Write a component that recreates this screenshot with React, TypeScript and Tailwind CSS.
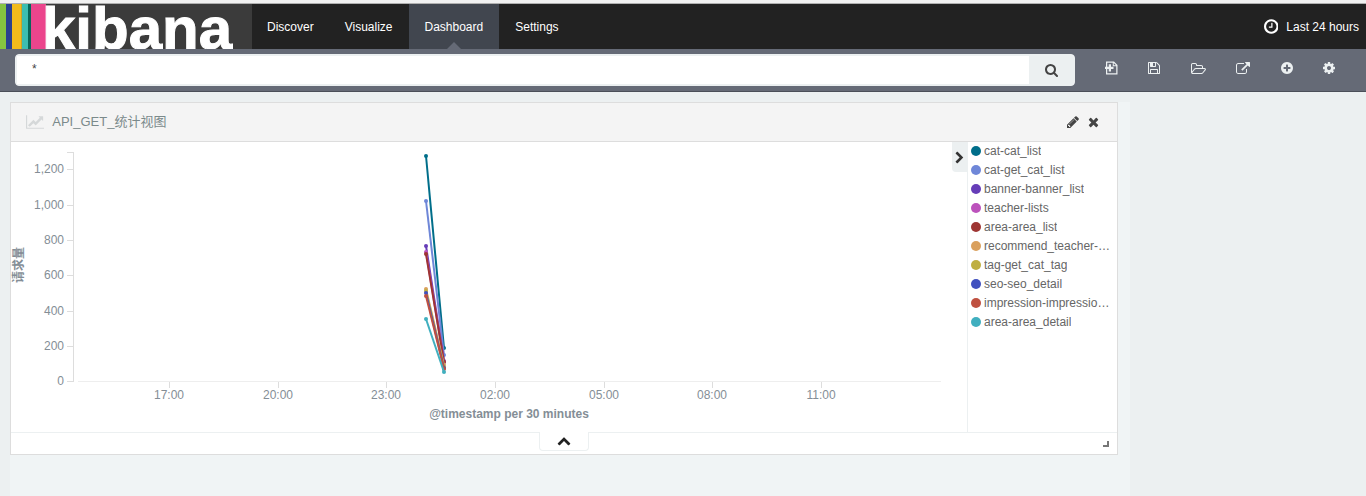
import React from 'react';

type Glyph = { w: number; d: string };

const glyphs: Record<string, Glyph> = {
  clock: { w: 1536, d: 'M896 544v448q0 14-9 23t-23 9h-320q-14 0-23-9t-9-23v-64q0-14 9-23t23-9h224v-352q0-14 9-23t23-9h64q14 0 23 9t9 23zm416 352q0-148-73-273t-198-198-273-73-273 73-198 198-73 273 73 273 198 198 273 73 273-73 198-198 73-273zm224 0q0 209-103 385.5t-279.5 279.5-385.5 103-385.5-103-279.5-279.5-103-385.5 103-385.5 279.5-279.5 385.5-103 385.5 103 279.5 279.5 103 385.5z' },
  search: { w: 1664, d: 'M1152 832q0-185-131.5-316.5t-316.5-131.5-316.5 131.5-131.5 316.5 131.5 316.5 316.5 131.5 316.5-131.5 131.5-316.5zm512 832q0 52-38 90t-90 38q-54 0-90-38l-343-342q-179 124-399 124-143 0-273.5-55.5t-225-150-150-225-55.5-273.5 55.5-273.5 150-225 225-150 273.5-55.5 273.5 55.5 225 150 150 225 55.5 273.5q0 220-124 399l343 343q37 37 37 90z' },
  fresh: { w: 1664, d: 'M128 64h1024l448 448v1216h-1472zM288 224v1344h1152v-896h-448v-448zM1120 256v288h288zM480 416h288v320h320v288h-320v320h-288v-320h-480v-288h480z' },
  save: { w: 1536, d: 'M384 1536h768v-384h-768v384zm896 0h128v-896q0-14-10-38.5t-20-34.5l-281-281q-10-10-34-20t-39-10v416q0 40-28 68t-68 28h-576q-40 0-68-28t-28-68v-416h-128v1280h128v-416q0-40 28-68t68-28h832q40 0 68 28t28 68v416zm-384-928v-320q0-13-9.5-22.5t-22.5-9.5h-192q-13 0-22.5 9.5t-9.5 22.5v320q0 13 9.5 22.5t22.5 9.5h192q13 0 22.5-9.5t9.5-22.5zm640 32v928q0 40-28 68t-68 28h-1344q-40 0-68-28t-28-68v-1344q0-40 28-68t68-28h928q40 0 88 20t76 48l280 280q28 28 48 76t20 88z' },
  folder: { w: 1920, d: 'M1781 1061q0-35-53-35h-1088q-40 0-85.5 21.5t-71.5 52.5l-294 363q-18 24-18 40 0 35 53 35h1088q40 0 86-22t71-53l294-363q18-22 18-39zm-1141-163h768v-160q0-40-28-68t-68-28h-576q-40 0-68-28t-28-68v-64q0-40-28-68t-68-28h-320q-40 0-68 28t-28 68v853l256-315q44-53 116-87.5t140-34.5zm1269 163q0 62-46 120l-295 363q-43 53-116 87.5t-140 34.5h-1088q-92 0-158-66t-66-158v-960q0-92 66-158t158-66h320q92 0 158 66t66 158v32h544q92 0 158 66t66 158v160h192q54 0 99 24.5t67 70.5q15 32 15 68z' },
  share: { w: 1792, d: 'M1408 1056v320q0 119-84.5 203.5t-203.5 84.5h-832q-119 0-203.5-84.5t-84.5-203.5v-832q0-119 84.5-203.5t203.5-84.5h704q14 0 23 9t9 23v64q0 14-9 23t-23 9h-704q-66 0-113 47t-47 113v832q0 66 47 113t113 47h832q66 0 113-47t47-113v-320q0-14 9-23t23-9h64q14 0 23 9t9 23zm384-864v512q0 26-19 45t-45 19-45-19l-176-176-652 652q-10 10-23 10t-23-10l-114-114q-10-10-10-23t10-23l652-652-176-176q-19-19-19-45t19-45 45-19h512q26 0 45 19t19 45z' },
  plus: { w: 1536, d: 'M1216 960v-128q0-26-19-45t-45-19h-256v-256q0-26-19-45t-45-19h-128q-26 0-45 19t-19 45v256h-256q-26 0-45 19t-19 45v128q0 26 19 45t45 19h256v256q0 26 19 45t45 19h128q26 0 45-19t19-45v-256h256q26 0 45-19t19-45zm320-64q0 209-103 385.5t-279.5 279.5-385.5 103-385.5-103-279.5-279.5-103-385.5 103-385.5 279.5-279.5 385.5-103 385.5 103 279.5 279.5 103 385.5z' },
  gear: { w: 1536, d: 'M1024 896q0-106-75-181t-181-75-181 75-75 181 75 181 181 75 181-75 75-181zm512-109v222q0 12-8 23t-20 13l-185 28q-19 54-39 91 35 50 107 138 10 12 10 25t-9 23q-27 37-99 108t-94 71q-12 0-26-9l-138-108q-44 23-91 38-16 136-29 186-7 28-36 28h-222q-14 0-24.5-8.5t-11.5-21.5l-28-184q-49-16-90-37l-141 107q-10 9-25 9-14 0-25-11-126-114-165-168-7-10-7-23 0-12 8-23 15-21 51-66.5t54-70.5q-27-50-41-99l-183-27q-13-2-21-12.5t-8-23.5v-222q0-12 8-23t19-13l186-28q14-46 39-92-40-57-107-138-10-12-10-24 0-10 9-23 26-36 98.5-107.5t94.5-71.5q13 0 26 10l138 107q44-23 91-38 16-136 29-186 7-28 36-28h222q14 0 24.5 8.5t11.5 21.5l28 184q49 16 90 37l142-107q9-9 24-9 13 0 25 10 129 119 165 170 7 8 7 22 0 12-8 23-15 21-51 66.5t-54 70.5q26 50 41 98l183 28q13 2 21 12.5t8 23.5z' },
  chart: { w: 2048, d: 'M2048 1536v128h-2048v-1536h128v1408h1920zm-128-1248v435q0 21-19.5 29.5t-35.5-7.5l-121-121-633 633q-10 10-23 10t-23-10l-233-233-416 416-192-192 585-585q10-10 23-10t23 10l233 233 464-464-121-121q-16-16-7.5-35.5t29.5-19.5h435q14 0 23 9t9 23z' },
  pencil: { w: 1536, d: 'M363 1536l91-91-235-235-91 91v107h128v128h107zm523-928q0-22-22-22-10 0-17 7l-542 542q-7 7-7 17 0 22 22 22 10 0 17-7l542-542q7-7 7-17zm-54-192l416 416-832 832h-416v-416zm683 96q0 53-37 90l-166 166-416-416 166-165q36-38 90-38 53 0 91 38l235 234q37 39 37 91z' },
  times: { w: 1408, d: 'M1298 1322q0 40-28 68l-136 136q-28 28-68 28t-68-28l-294-294-294 294q-28 28-68 28t-68-28l-136-136q-28-28-28-68t28-68l294-294-294-294q-28-28-28-68t28-68l136-136q28-28 68-28t68 28l294 294 294-294q28-28 68-28t68 28l136 136q28 28 28 68t-28 68l-294 294 294 294q28 28 28 68z' },
  right: { w: 1280, d: 'M1107 941l-742 742q-19 19-45 19t-45-19l-166-166q-19-19-19-45t19-45l531-531-531-531q-19-19-19-45t19-45l166-166q19-19 45-19t45 19l742 742q19 19 19 45t-19 45z' },
  up: { w: 1792, d: 'M1683 1267l-166 165q-19 19-45 19t-45-19l-531-531-531 531q-19 19-45 19t-45-19l-166-165q-19-19-19-45.500t19-45.500l742-741q19-19 45-19t45 19l742 741q19 19 19 45.500t-19 45.500z' },
};

function Icon({ name, className }: { name: string; className: string }) {
  const g = glyphs[name];
  return (
    <svg viewBox={`0 0 ${g.w} 1792`} className={`block w-auto fill-current ${className}`} aria-hidden="true">
      <path d={g.d} />
    </svg>
  );
}

const navItems = ['Discover', 'Visualize', 'Dashboard', 'Settings'];

const tools = [
  { icon: 'fresh', label: 'New Dashboard' },
  { icon: 'save', label: 'Save Dashboard' },
  { icon: 'folder', label: 'Load Saved Dashboard' },
  { icon: 'share', label: 'Share' },
  { icon: 'plus', label: 'Add Visualization' },
  { icon: 'gear', label: 'Options' },
];

const series = [
  { name: 'cat-cat_list', color: '#006e8a', from: 156, to: 348 },
  { name: 'cat-get_cat_list', color: '#6f87d8', from: 201, to: 355 },
  { name: 'banner-banner_list', color: '#663db8', from: 246, to: 361 },
  { name: 'teacher-lists', color: '#bc52bc', from: 252, to: 362 },
  { name: 'area-area_list', color: '#9e3533', from: 254, to: 362 },
  { name: 'recommend_teacher-recommend_list', color: '#daa05d', from: 289, to: 365 },
  { name: 'tag-get_cat_tag', color: '#bfaf40', from: 291, to: 367 },
  { name: 'seo-seo_detail', color: '#4050bf', from: 293, to: 368 },
  { name: 'impression-impression_list', color: '#bf5040', from: 296, to: 369 },
  { name: 'area-area_detail', color: '#40afbf', from: 319, to: 372 },
];

const yTicks = [
  ['1,200', 169], ['1,000', 205], ['800', 240], ['600', 275], ['400', 311], ['200', 346], ['0', 381],
] as const;

const xTicks = [
  ['17:00', 169], ['20:00', 278], ['23:00', 386], ['02:00', 495], ['05:00', 604], ['08:00', 712], ['11:00', 821],
] as const;

function Logo() {
  return (
    <svg viewBox="0 0 252 45" className="h-[45px] w-[252px] shrink-0" role="img" aria-label="kibana">
      <rect width="252" height="45" fill="#3b3b3b" />
      <rect width="6" height="45" fill="#85c441" />
      <rect x="6" width="6" height="45" fill="#2a4190" />
      <rect x="12" width="9" height="45" fill="#f2bb1c" />
      <rect x="21" width="1" height="45" fill="#c9a227" />
      <rect x="22" width="6" height="45" fill="#3cbeb1" />
      <rect x="28" width="3" height="45" fill="#08665b" />
      <rect x="31" width="15" height="45" fill="#eb458c" />
      <text x="42" y="45" fill="#fff" stroke="#fff" fontSize="60" fontWeight="700" fontFamily="'Liberation Sans', Arial, sans-serif">
        kibana
      </text>
    </svg>
  );
}

function Chart() {
  return (
    <svg viewBox="11 142 941 290" className="block h-auto w-full text-[12px]" role="img" aria-label="请求量 @timestamp per 30 minutes">
      <g stroke="#ddd" fill="none" shapeRendering="crispEdges">
        <path d="M67 152.500h6.500v229h-6.500" />
        {yTicks.slice(0, 6).map(([t, y]) => <path key={t} d={`M67 ${y + 0.5}h6`} />)}
        <path d="M78 381.500h863" stroke="#eee" />
        {xTicks.map(([t, x]) => <path key={t} d={`M${x + 0.5} 382v6`} />)}
      </g>
      <g fill="#848e96">
        {yTicks.map(([t, y]) => <text key={t} x="64" y={y + 4} textAnchor="end">{t}</text>)}
        {xTicks.map(([t, x]) => <text key={t} x={x} y="399" textAnchor="middle">{t}</text>)}
        <text x="509" y="418" textAnchor="middle" fontWeight="700">@timestamp per 30 minutes</text>
        <text transform="translate(23 265) rotate(-90)" textAnchor="middle" fontWeight="700">请求量</text>
      </g>
      {series.map((s) => (
        <g key={s.name} fill={s.color}>
          <path d={`M426 ${s.from}L444 ${s.to}`} stroke={s.color} strokeWidth="2" />
          <circle cx="426" cy={s.from} r="2" />
          <circle cx="444" cy={s.to} r="2" />
        </g>
      ))}
    </svg>
  );
}

export default function App() {
  return (
    <div className="flex min-h-screen flex-col bg-[#ecf0f1] font-['Liberation_Sans','Noto_Sans_CJK_SC',sans-serif] text-[12px] leading-4">
      <div className="h-1 border-b border-[#b0b0b0] bg-[#f1f1f1]" />
      <header className="flex h-[45px] bg-[#222] text-white">
        <Logo />
        <nav className="flex gap-px">
          {navItems.map((item) => (
            <a
              key={item}
              href={`#${item.toLowerCase()}`}
              className={`relative flex items-center ${item === 'Dashboard' ? 'bg-[#41464f] px-4' : 'px-[15px]'}`}
            >
              {item}
              {item === 'Dashboard' && (
                <svg viewBox="0 0 14 7" className="absolute bottom-0 left-1/2 h-[7px] w-[14px] -translate-x-1/2" aria-hidden="true">
                  <path d="M0 7L7 0L14 7Z" fill="#656a76" />
                </svg>
              )}
            </a>
          ))}
        </nav>
        <button type="button" className="ml-auto flex items-center gap-2 pr-[7px]">
          <Icon name="clock" className="h-[17px]" />
          Last 24 hours
        </button>
      </header>

      <div className="flex h-[43px] items-center border-b border-[#4b4f59] bg-[#656a76] pr-4 pl-[15px]">
        <form className="flex h-8 w-[1060px] min-w-0 overflow-hidden rounded border border-[#ecf0f1] bg-white" onSubmit={(e) => e.preventDefault()}>
          <input
            aria-label="Query"
            defaultValue="*"
            className="min-w-0 flex-1 border-y border-l border-[#ecf0f1] px-[15px] pb-[2px] text-[#444] outline-none"
          />
          <button type="submit" aria-label="Search" className="flex w-[45px] items-center justify-center bg-[#ecf0f1] text-[#444]">
            <Icon name="search" className="h-[14px]" />
          </button>
        </form>
        <div className="flex flex-1 items-center justify-between pr-[15px] pb-1 pl-[30px] text-[#ecf0f1]">
          {tools.map((t) => (
            <button key={t.label} type="button" aria-label={t.label}>
              <Icon name={t.icon} className="h-[14px]" />
            </button>
          ))}
        </div>
      </div>

      <main className="flex flex-1 px-[10px] pt-[10px]">
        <div className="w-[1120px] max-w-full bg-[#f0f4f5] pr-3 pb-[41px]">
          <section className="border border-[#ddd] bg-white">
            <div className="flex h-[39px] items-center border-b border-[#ddd] bg-[#f4f4f4] pr-[18px] pl-[15px] text-[#444]">
              <Icon name="chart" className="h-4 text-[#d5d8d9]" />
              <h1 className="ml-2 flex-1 text-[13px] text-[#7b8a8b]">API_GET_统计视图</h1>
              <button type="button" aria-label="Edit" className="mr-[9px]"><Icon name="pencil" className="h-[14px]" /></button>
              <button type="button" aria-label="Remove"><Icon name="times" className="h-[14px]" /></button>
            </div>
            <div className="flex border-b border-[#ecf0f1]">
              <div className="min-w-0 flex-1"><Chart /></div>
              <button type="button" aria-label="Toggle legend" className="flex h-[30px] w-[15px] items-center justify-center rounded-bl bg-[#ecf0f1] text-[#333]">
                <Icon name="right" className="h-[13px]" />
              </button>
              <ul className="w-[150px] border-l border-[#ecf0f1] pr-1 pl-[3px] text-[#666]">
                {series.map((s) => (
                  <li key={s.name} className="mb-px flex h-[18px] items-center gap-[3px]">
                    <svg viewBox="0 0 10 10" className="size-[10px] shrink-0" aria-hidden="true">
                      <circle cx="5" cy="5" r="5" fill={s.color} />
                    </svg>
                    <span className="truncate">{s.name}</span>
                  </li>
                ))}
              </ul>
            </div>
            <div className="relative flex h-[21px] items-center justify-end pr-2">
              <button
                type="button"
                aria-label="Toggle table"
                className="absolute -top-px left-1/2 flex h-[19px] w-[50px] -translate-x-1/2 items-center justify-center rounded-b border border-t-0 border-[#ecf0f1] bg-white text-[#222]"
              >
                <Icon name="up" className="h-[14px]" />
              </button>
              <div className="size-[6px] border-r-2 border-b-2 border-[#777]" />
            </div>
          </section>
        </div>
      </main>
    </div>
  );
}
